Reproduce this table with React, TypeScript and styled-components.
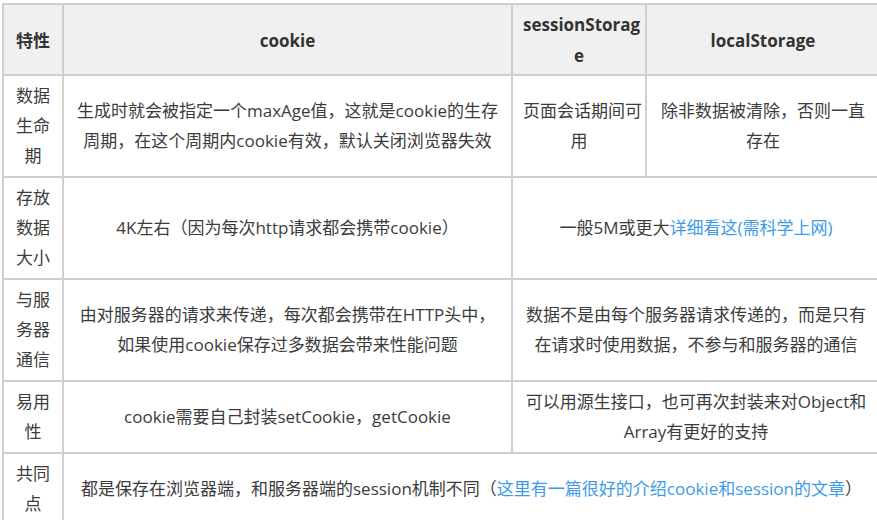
import React from 'react';
import styled, { createGlobalStyle } from 'styled-components';

const GlobalStyle = createGlobalStyle`
  html, body {
    margin: 0;
    padding: 0;
    background: #ffffff;
    overflow: hidden;
  }
  body {
    font-family: "Open Sans", "Noto Sans CJK SC", sans-serif;
    color: #404040;
  }
`;

const Page = styled.div`
  padding: 3px 0 0 2px;
  width: 900px;
`;

const Table = styled.table`
  width: 877px;
  table-layout: fixed;
  border-collapse: collapse;
  font-size: 17px;
  line-height: 30px;
`;

const HeadCell = styled.th`
  background: #f0f0f0;
  border: 2px solid #cfcfcf;
  padding: 4px 10px 3px;
  font-weight: 700;
  color: #333333;
  text-align: center;
  vertical-align: middle;
  line-height: 31px;
`;

const Cell = styled.td<{ $label?: boolean }>`
  border: 2px solid #cfcfcf;
  padding: 5px 10px 5px;
  text-align: center;
  vertical-align: middle;
  color: #3c3c3c;
  white-space: ${(p) => (p.$label ? 'normal' : 'nowrap')};
`;

const Link = styled.a`
  color: #3d9be9;
  text-decoration: none;
`;

const rows = [
  {
    label: '数据生命期',
    cells: [
      { span: 1, content: <>生成时就会被指定一个maxAge值，这就是cookie的生存<br />周期，在这个周期内cookie有效，默认关闭浏览器失效</> },
      { span: 1, content: <>页面会话期间可<br />用</> },
      { span: 1, content: <>除非数据被清除，否则一直<br />存在</> },
    ],
  },
  {
    label: '存放数据大小',
    cells: [
      { span: 1, content: <>4K左右（因为每次http请求都会携带cookie）</> },
      { span: 2, content: <>一般5M或更大<Link href="#">详细看这(需科学上网)</Link></> },
    ],
  },
  {
    label: '与服务器通信',
    cells: [
      { span: 1, content: <>由对服务器的请求来传递，每次都会携带在HTTP头中，<br />如果使用cookie保存过多数据会带来性能问题</> },
      { span: 2, content: <>数据不是由每个服务器请求传递的，而是只有<br />在请求时使用数据，不参与和服务器的通信</> },
    ],
  },
  {
    label: '易用性',
    cells: [
      { span: 1, content: <>cookie需要自己封装setCookie，getCookie</> },
      { span: 2, content: <>可以用源生接口，也可再次封装来对Object和<br />Array有更好的支持</> },
    ],
  },
  {
    label: '共同点',
    cells: [
      {
        span: 3,
        content: <>都是保存在浏览器端，和服务器端的session机制不同（<Link href="#">这里有一篇很好的介绍cookie和session的文章</Link>）</>,
      },
    ],
  },
];

const App = () => (
  <Page>
    <GlobalStyle />
    <Table>
      <colgroup>
        <col style={{ width: 60 }} />
        <col style={{ width: 449 }} />
        <col style={{ width: 134 }} />
        <col style={{ width: 234 }} />
      </colgroup>
      <thead>
        <tr>
          <HeadCell>特性</HeadCell>
          <HeadCell>cookie</HeadCell>
          <HeadCell>sessionStorag<br />e</HeadCell>
          <HeadCell>localStorage</HeadCell>
        </tr>
      </thead>
      <tbody>
        {rows.map((row) => (
          <tr key={row.label}>
            <Cell $label>{row.label}</Cell>
            {row.cells.map((c, i) => (
              <Cell key={i} colSpan={c.span}>{c.content}</Cell>
            ))}
          </tr>
        ))}
      </tbody>
    </Table>
  </Page>
);

export default App;
